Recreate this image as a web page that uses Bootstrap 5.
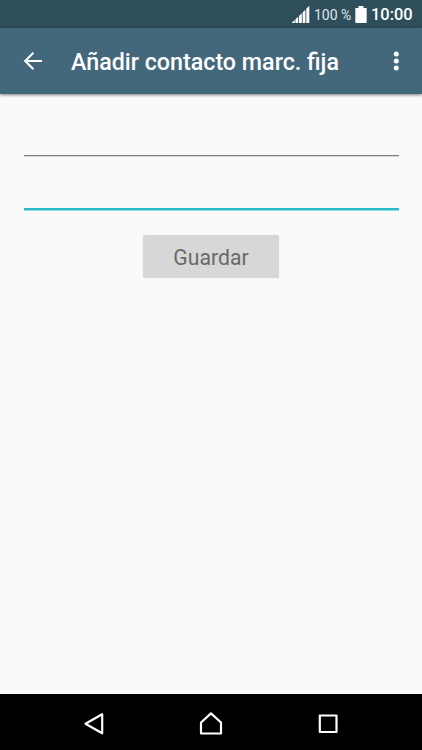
<!DOCTYPE html>
<html lang="es">
<head>
<meta charset="utf-8">
<meta name="viewport" content="width=device-width, initial-scale=1">
<title>Añadir contacto marc. fija</title>
<link href="https://cdn.jsdelivr.net/npm/bootstrap@5.3.0/dist/css/bootstrap.min.css" rel="stylesheet">
<style>
body{font-family:Roboto,"Noto Sans",sans-serif;background:#fafafa;height:100vh;overflow:hidden}
svg{display:block;flex:none}
.status-bar{height:28px;background:#2f4e5c;padding:1px 9px 0 0;line-height:28px}
.pct{font-size:14px;color:#dfe6e9;margin:0 3px 0 4px;width:38px}
.clock{font-size:16.4px;font-weight:500;margin-left:4px;width:42px}
.app-bar{height:66px;background:#43677b;box-shadow:0 1px 3px rgba(0,0,0,.5);padding:0 14px 0 21px}
.app-title{font-size:23.25px;font-weight:500;line-height:30px;margin:2px 0 0 26px}
.field-line{height:53px;border:0;border-radius:0;background:transparent!important;box-shadow:0 1px #d6d6d6!important;padding:0;border-bottom:1px solid #808080}
.form-area{padding:9px 23.5px 0}
.field-line.active-line{border-bottom:2px solid #27b9c4;height:54px;box-shadow:0 1px #8edbe1!important}
.save-btn{width:136px;height:43px;margin-top:25px;background:#d7d7d7;color:#696969;font-size:21.2px;line-height:44px;border-radius:2px;padding:1px 0 0;border:0;box-shadow:0 0 1px rgba(0,0,0,.2)}
.save-btn:hover{background:#cfcfcf}
.system-nav{height:56px;background:#000;padding:3px 78px 0}
</style>
</head>
<body class="d-flex flex-column">
<header class="status-bar d-flex align-items-center justify-content-end text-white">
  <svg width="19" height="19" viewBox="0 0 19 19" fill="#fff"><path d="M1 18v-.5L3.700 15v3zM4.400 18v-3.700l2.800-2.600V18zM8 18v-7.100l2.800-2.700V18zM11.600 18V7.400l2.800-2.700V18zM15.300 18V3.700L18.300.8V18z"/></svg>
  <span class="pct text-nowrap">100 %</span>
  <svg width="12" height="18" viewBox="0 0 12 18" fill="#fff"><path d="M3.500 0h5v2H11q.7 0 .7.700v13.600q0 .7-.7.700H1q-.7 0-.7-.7V2.700Q.3 2 1 2h2.500z"/></svg>
  <span class="clock text-nowrap">10:00</span>
</header>
<nav class="app-bar d-flex align-items-center text-white position-relative">
  <svg width="24" height="24" viewBox="0 0 24 24" fill="none" stroke="#fff" stroke-width="2.100"><path d="M21 12H4.500M12.400 3.700 4.200 12l8.200 8.300"/></svg>
  <h1 class="app-title text-nowrap">Añadir contacto marc. fija</h1>
  <svg class="ms-auto" width="24" height="24" viewBox="0 0 24 24" fill="#fff"><circle cx="12.300" cy="5" r="2.500"/><circle cx="12.300" cy="12" r="2.500"/><circle cx="12.300" cy="19" r="2.500"/></svg>
</nav>
<main class="form-area flex-grow-1 d-flex flex-column align-items-center">
  <input class="form-control field-line" type="text" aria-label="Nombre">
  <input class="form-control field-line active-line" type="text" aria-label="Número">
  <button class="btn save-btn" type="button">Guardar</button>
</main>
<footer class="system-nav d-flex align-items-center justify-content-between">
  <svg width="32" height="32" viewBox="0 0 32 32" fill="none" stroke="#fff" stroke-width="2.200" stroke-linejoin="round"><path d="M24.200 6.300v19L7.500 15.800z"/></svg>
  <svg width="32" height="32" viewBox="0 0 32 32" fill="none" stroke="#fff" stroke-width="2.200" stroke-linejoin="round"><path d="M6 25.500V14.500l10-9.100 10 9.100v11z"/></svg>
  <svg width="32" height="32" viewBox="0 0 32 32" fill="none" stroke="#fff" stroke-width="2.200" stroke-linejoin="round"><path d="M7.800 7.500h16.700V24H7.800z"/></svg>
</footer>
<script src="https://cdn.jsdelivr.net/npm/bootstrap@5.3.0/dist/js/bootstrap.bundle.min.js"></script>
</body>
</html>
